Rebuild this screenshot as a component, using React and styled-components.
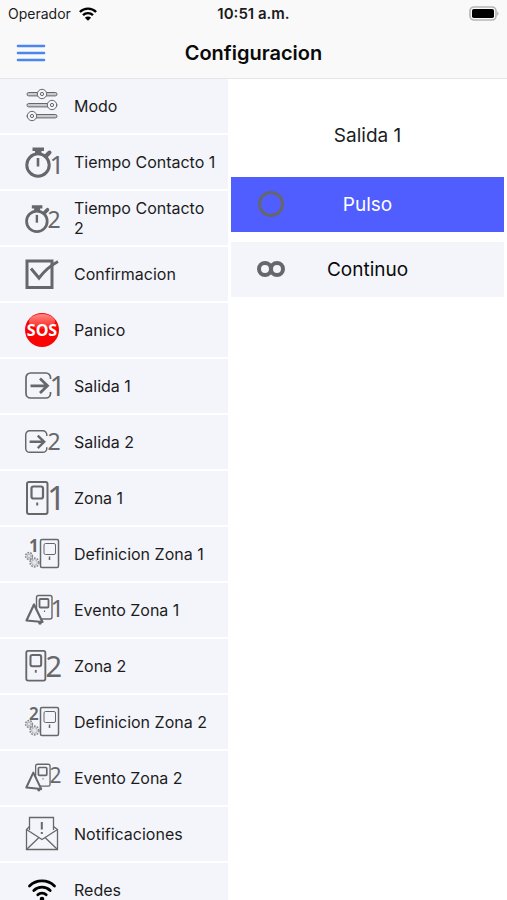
import React, { useState } from "react";
import styled, { createGlobalStyle } from "styled-components";

const GlobalStyle = createGlobalStyle`
  *, *::before, *::after { box-sizing: border-box; }
  html, body { margin: 0; background: #ffffff; }
  body { font-family: Inter, "Liberation Sans", sans-serif; color: #1c1c1e; }
  button { font: inherit; color: inherit; border: 0; margin: 0; padding: 0; cursor: pointer; }
`;

const Screen = styled.div`
  display: flex;
  flex-direction: column;
  height: 100vh;
  overflow: hidden;
`;

const TopBar = styled.header`
  flex: none;
  background: #f9f9f9;
  border-bottom: 1px solid #e6e6e8;
`;

const StatusBar = styled.div`
  display: grid;
  grid-template-columns: 1fr auto 1fr;
  align-items: center;
  height: 27px;
  padding: 0 8px;
  font-size: 14px;
  line-height: 20px;
`;

const Carrier = styled.div`
  display: flex;
  align-items: center;
  gap: 8px;
`;

const Clock = styled.time`
  font-size: 15px;
  font-weight: 600;
`;

const BatterySlot = styled.div`
  display: flex;
  justify-content: flex-end;
`;

const NavBar = styled.div`
  display: grid;
  grid-template-columns: 62px 1fr 62px;
  align-items: center;
  height: 51px;
`;

const MenuButton = styled.button`
  display: flex;
  align-items: center;
  justify-content: center;
  height: 44px;
  background: none;
`;

const Title = styled.h1`
  margin: 0;
  text-align: center;
  font-size: 20px;
  line-height: 24px;
  font-weight: 600;
  color: #0a0a0a;
`;

const Body = styled.div`
  display: grid;
  grid-template-columns: 9fr 11fr;
  flex: 1;
  min-height: 0;
`;

const SideNav = styled.nav`
  overflow-y: auto;
  scrollbar-width: none;
  background: #ffffff;
`;

const SideList = styled.ul`
  display: flex;
  flex-direction: column;
  gap: 2px;
  margin: 0;
  padding: 0;
  list-style: none;
`;

const SideItem = styled.button`
  display: flex;
  align-items: center;
  gap: 14px;
  width: 100%;
  min-height: 54px;
  padding: 0 12px 0 24px;
  background: #f4f5fa;
  text-align: left;
  font-size: 16px;
  line-height: 20px;
`;

const IconBox = styled.svg`
  flex: none;
  display: block;
  width: 36px;
  height: 36px;
  overflow: visible;
  fill: none;
  stroke: #66676a;
  stroke-width: 2;
`;

const Digit = styled.text`
  fill: #66676a;
  stroke: none;
  font-family: "Noto Sans", "Open Sans", sans-serif;
`;

const SosText = styled.text`
  fill: #ffffff;
  stroke: none;
  font-family: "Open Sans", sans-serif;
  font-weight: 700;
`;

const Panel = styled.main`
  padding: 0 3px;
  background: #ffffff;
`;

const PanelTitle = styled.h2`
  display: flex;
  align-items: center;
  justify-content: center;
  height: 98px;
  margin: 0;
  padding-top: 16px;
  font-size: 19px;
  line-height: 24px;
  font-weight: 400;
`;

const Options = styled.div`
  display: flex;
  flex-direction: column;
  gap: 10px;
`;

const Option = styled.button`
  display: grid;
  grid-template-columns: 80px 1fr 80px;
  align-items: center;
  justify-items: center;
  min-height: 55px;
  background: ${(p) => (p.$selected ? "#505eff" : "#f4f5fa")};
  color: ${(p) => (p.$selected ? "#ffffff" : "#0a0a0a")};
  font-size: 19px;
  line-height: 24px;
`;

const OptionIcon = styled.svg`
  display: block;
  width: 28px;
  height: 28px;
  fill: none;
  stroke: #66676a;
`;

const Icon = ({ children }) => (
  <IconBox viewBox="0 0 36 36" aria-hidden="true">
    {children}
  </IconBox>
);

const Slider = ({ y, knob }) => (
  <g strokeWidth="1">
    <rect x="3" y={y - 1.5} width="30" height="3.4" rx="1.7" fill="#c9cacc" />
    <circle cx={knob} cy={y} r="4.7" fill="#f4f5fa" />
    <circle cx={knob} cy={y} r="1.6" />
  </g>
);

const ModeIcon = () => (
  <Icon>
    <Slider y={6} knob={18} />
    <Slider y={17} knob={28} />
    <Slider y={28} knob={8} />
  </Icon>
);

const StopwatchIcon = ({ digit }) => {
  const small = digit === 2;
  return (
    <Icon>
      <g transform={small ? "translate(0 2) scale(.92)" : undefined}>
        <circle cx="14" cy="21" r="11.2" strokeWidth="3" />
        <path d="M8.5 3.500h11.500v3.500h-2.500v3h-6.500v-3h-2.500z" fill="#66676a" stroke="none" />
        <path d="M14 14v8.500" strokeWidth="2.600" />
        <path d="M22 12l3.500-3.500" strokeWidth="4" strokeLinecap="round" />
      </g>
      {small ? (
        <Digit x="23.500" y="28" fontSize="23">2</Digit>
      ) : (
        <Digit x="25.500" y="30" fontSize="26">1</Digit>
      )}
    </Icon>
  );
};

const CheckIcon = () => (
  <Icon>
    <rect x="3" y="5" width="25" height="26.500" strokeWidth="3" />
    <path d="M7 12.500l8 9.500Q23 11.500 34 5.500" strokeWidth="3" />
  </Icon>
);

const SosIcon = () => (
  <Icon>
    <defs>
      <linearGradient id="sosGloss" x1="0" y1="0" x2="0" y2="1">
        <stop offset="0" stopColor="#ff8a86" />
        <stop offset="1" stopColor="#fb1d18" />
      </linearGradient>
    </defs>
    <circle cx="18" cy="18" r="17" fill="#fa0505" stroke="none" />
    <ellipse cx="18" cy="9.500" rx="13" ry="7.500" fill="url(#sosGloss)" stroke="none" />
    <SosText x="18" y="24" textAnchor="middle" fontSize="16">SOS</SosText>
  </Icon>
);

const OutputIcon = ({ digit }) => {
  const small = digit === 2;
  return (
    <Icon>
      <g transform={small ? "translate(0 2.500) scale(.86)" : undefined}>
        <path d="M26.500 11V9.500a4.500 4.500 0 0 0-4.500-4.500H6.500a4.500 4.500 0 0 0-4.500 4.500v16a4.500 4.500 0 0 0 4.500 4.500H22a4.500 4.500 0 0 0 4.500-4.500V24" strokeWidth="1.700" />
        <path d="M6.500 17.800h17M16 10.500l7.500 7.300-7.500 7.300" strokeWidth="2.800" />
      </g>
      {small ? (
        <Digit x="23.500" y="26" fontSize="23">2</Digit>
      ) : (
        <Digit x="25.500" y="28" fontSize="28">1</Digit>
      )}
    </Icon>
  );
};

const ZoneIcon = ({ digit }) => {
  const small = digit === 2;
  return (
    <Icon>
      <g transform={small ? "translate(-.5 1) scale(.93)" : undefined}>
        <rect x="3" y="2" width="20.500" height="32" rx="2" />
        <rect x="7.500" y="6.500" width="11.500" height="12" rx="2" strokeWidth="2.200" />
        <path d="M13.200 22.500v3" strokeWidth="2" />
      </g>
      {small ? (
        <Digit x="21.500" y="29" fontSize="29">2</Digit>
      ) : (
        <Digit x="23" y="30" fontSize="33">1</Digit>
      )}
    </Icon>
  );
};

const Gear = ({ cx, cy, r }) => (
  <g strokeWidth="1" stroke="#8b8c8f">
    <circle cx={cx} cy={cy} r={r} strokeWidth="1.600" strokeDasharray="1.800 1" />
    <circle cx={cx} cy={cy} r={r - 1.5} fill="#e4e5e8" strokeWidth=".6" />
  </g>
);

const ZoneDefinitionIcon = ({ digit }) => (
  <Icon>
    <rect x="16.500" y="3.500" width="18" height="28" rx="1.500" strokeWidth="1.500" />
    <rect x="20" y="7.500" width="11.500" height="11" rx="1.500" strokeWidth="1" />
    <path d="M25.500 20.500v3.500" strokeWidth="1.500" />
    <Gear cx={5} cy={20} r={3.4} />
    <Gear cx={10.5} cy={26.5} r={4.4} />
    <Digit x="5" y="15.500" fontSize="17" fontWeight={digit === 1 ? 700 : 600}>{digit}</Digit>
  </Icon>
);

const ZoneEventIcon = ({ digit }) => {
  const small = digit === 2;
  return (
    <Icon>
      <g transform={small ? "translate(0 1) scale(.93)" : undefined}>
        <rect x="12.500" y="3.500" width="15.500" height="23.500" rx="2" strokeWidth="1.400" />
        <rect x="15.500" y="7" width="9" height="8.500" rx="1" strokeWidth="1.800" />
        <path d="M20.500 18.500v1.500" strokeWidth="1.200" />
        <path d="M10 12.500L2.500 28.500L18.500 30Z" fill="#f4f5fa" strokeWidth="2.200" strokeLinejoin="round" />
        <circle cx="16" cy="31" r="1.800" fill="#66676a" stroke="none" />
      </g>
      {small ? (
        <Digit x="25.500" y="23" fontSize="21">2</Digit>
      ) : (
        <Digit x="26.500" y="25" fontSize="24">1</Digit>
      )}
    </Icon>
  );
};

const MailIcon = () => (
  <Icon>
    <g strokeWidth="1.300">
      <path d="M5.500 14V1.500h24V14" />
      <path d="M5.500 10.500L2.500 13.500V33.500h31V13.500L29.500 10.500" />
      <path d="M2.500 13.500L18 23.500L33.500 13.500M2.500 33.500L15 21.500M33.500 33.500L21 21.500" />
    </g>
    <path d="M17.800 6v7.500M17.800 16v2" strokeWidth="2" />
  </Icon>
);

const NetworkIcon = () => (
  <Icon>
    <g stroke="#000000" strokeWidth="2.800" strokeLinecap="round">
      <path d="M5.500 14a18 18 0 0 1 25 0" />
      <path d="M9.800 18.500a11.800 11.800 0 0 1 16.400 0" />
      <path d="M13.800 22.800a6 6 0 0 1 8.400 0" />
      <circle cx="18" cy="27" r="2.300" fill="#000000" stroke="none" />
    </g>
  </Icon>
);

const StatusWifi = () => (
  <svg width="18" height="14" viewBox="0 0 18 14" aria-label="Wi-Fi" role="img">
    <g fill="none" stroke="#000000" strokeWidth="2.400">
      <path d="M.9 5a11.500 11.500 0 0 1 16.200 0" />
      <path d="M4 8.200a7.100 7.100 0 0 1 10 0" />
    </g>
    <path d="M9 13.800L5.900 10.700a4.400 4.400 0 0 1 6.200 0z" fill="#000000" />
  </svg>
);

const Battery = () => (
  <svg width="30" height="15" viewBox="0 0 30 15" aria-label="Bateria" role="img">
    <rect x="1" y="1" width="26" height="13" rx="4" fill="#f9f9f9" stroke="#b5b5b5" strokeWidth="1.600" />
    <rect x="3" y="3" width="22" height="9" rx="1.800" fill="#000000" />
    <path d="M28.300 5.200q2.400 2.300 0 4.600z" fill="#a5a5a5" />
  </svg>
);

const MenuGlyph = () => (
  <svg width="30" height="20" viewBox="0 0 30 20" aria-hidden="true">
    <path d="M2 3h26M2 10h26M2 17h26" stroke="#4a86ee" strokeWidth="2.600" strokeLinecap="round" />
  </svg>
);

const sections = [
  { label: "Modo", icon: <ModeIcon /> },
  { label: "Tiempo Contacto 1", icon: <StopwatchIcon digit={1} /> },
  { label: "Tiempo Contacto 2", icon: <StopwatchIcon digit={2} /> },
  { label: "Confirmacion", icon: <CheckIcon /> },
  { label: "Panico", icon: <SosIcon /> },
  { label: "Salida 1", icon: <OutputIcon digit={1} /> },
  { label: "Salida 2", icon: <OutputIcon digit={2} /> },
  { label: "Zona 1", icon: <ZoneIcon digit={1} /> },
  { label: "Definicion Zona 1", icon: <ZoneDefinitionIcon digit={1} /> },
  { label: "Evento Zona 1", icon: <ZoneEventIcon digit={1} /> },
  { label: "Zona 2", icon: <ZoneIcon digit={2} /> },
  { label: "Definicion Zona 2", icon: <ZoneDefinitionIcon digit={2} /> },
  { label: "Evento Zona 2", icon: <ZoneEventIcon digit={2} /> },
  { label: "Notificaciones", icon: <MailIcon /> },
  { label: "Redes", icon: <NetworkIcon /> },
];

export default function App() {
  const [mode, setMode] = useState("Pulso");

  return (
    <Screen>
      <GlobalStyle />
      <TopBar>
        <StatusBar>
          <Carrier>
            <span>Operador</span>
            <StatusWifi />
          </Carrier>
          <Clock>10:51 a.m.</Clock>
          <BatterySlot>
            <Battery />
          </BatterySlot>
        </StatusBar>
        <NavBar>
          <MenuButton type="button" aria-label="Menu">
            <MenuGlyph />
          </MenuButton>
          <Title>Configuracion</Title>
        </NavBar>
      </TopBar>
      <Body>
        <SideNav>
          <SideList>
            {sections.map(({ label, icon }) => (
              <li key={label}>
                <SideItem type="button">
                  {icon}
                  <span>{label}</span>
                </SideItem>
              </li>
            ))}
          </SideList>
        </SideNav>
        <Panel>
          <PanelTitle>Salida 1</PanelTitle>
          <Options>
            <Option type="button" $selected={mode === "Pulso"} aria-pressed={mode === "Pulso"} onClick={() => setMode("Pulso")}>
              <OptionIcon viewBox="0 0 28 28" aria-hidden="true">
                <circle cx="14" cy="13" r="11.500" strokeWidth="3" />
                <path d="M11 25.500l2-2.500M15 25.800l2-2.500" strokeWidth="1.500" />
              </OptionIcon>
              <span>Pulso</span>
            </Option>
            <Option type="button" $selected={mode === "Continuo"} aria-pressed={mode === "Continuo"} onClick={() => setMode("Continuo")}>
              <OptionIcon viewBox="0 0 28 28" aria-hidden="true">
                <g strokeWidth="4">
                  <circle cx="8" cy="13" r="6" />
                  <circle cx="20" cy="13" r="6" />
                </g>
              </OptionIcon>
              <span>Continuo</span>
            </Option>
          </Options>
        </Panel>
      </Body>
    </Screen>
  );
}
